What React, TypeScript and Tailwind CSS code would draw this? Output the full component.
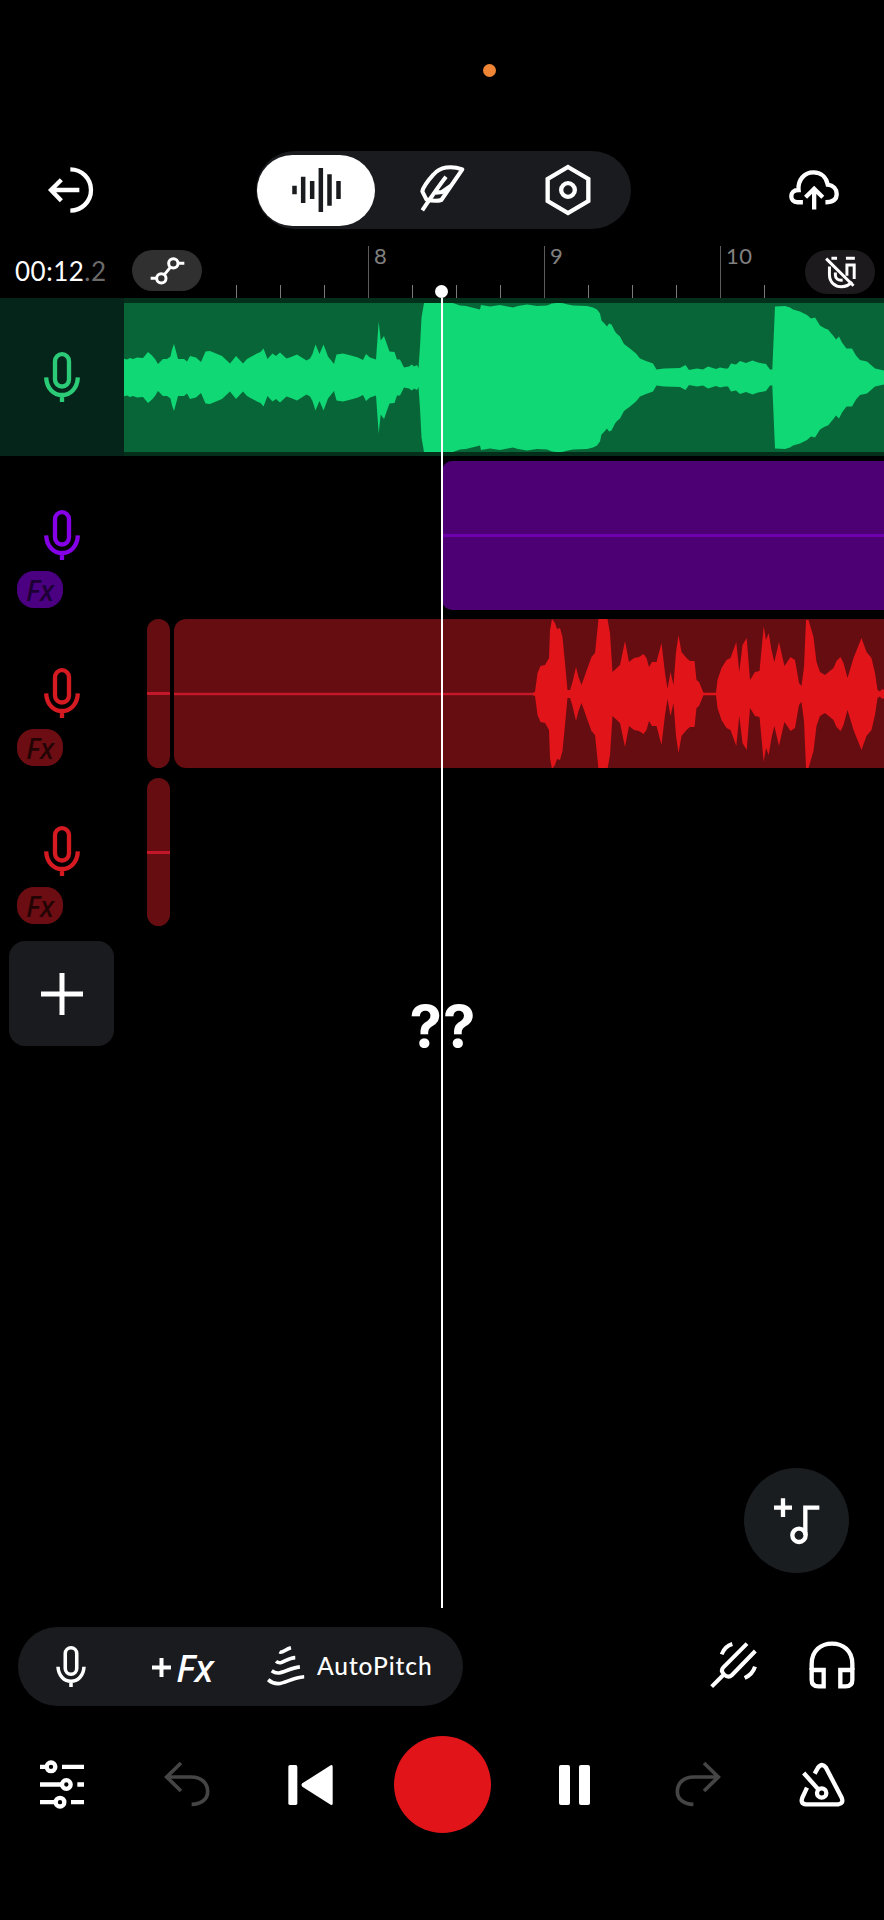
import type { ReactNode } from 'react';
import clsx from 'clsx';

type Point = [number, number];

// [x, amplitude] pairs, mirrored around the middle of the clip
const greenWave: Point[] = [
  [123.5, 19], [127, 18], [130, 19.5], [133, 18.5], [137, 20], [143, 19.5], [148, 25.5], [152, 22], [155, 18.5], [158, 13.5],
  [163, 18.5], [167, 18.5], [170.5, 21], [172, 28], [174, 33.5], [175.5, 28], [178, 18.5], [184, 18.5], [187, 16], [190, 21.5],
  [196, 20], [201, 15.5], [205.5, 26], [210, 26.5], [216, 24], [222, 21.5], [230, 14], [236, 21.5], [243, 14], [247, 18.5],
  [257, 24], [260.5, 25.5], [263.5, 29], [267.5, 18.5], [272.5, 24], [276, 21.5], [280, 25], [286.5, 19], [291, 20.5], [297, 23],
  [306.5, 17], [310, 19], [312.5, 23.5], [315.5, 33], [319.5, 23.5], [323.5, 33], [328, 21], [334, 13.5], [336.5, 23], [343, 24],
  [351, 22], [358, 20], [363, 17.5], [366, 23.5], [370, 20], [376, 18], [378.7, 56], [380.7, 37], [384, 41.5], [387, 33],
  [389.5, 26], [394.5, 25.5], [397, 18], [400, 18], [404, 10], [409, 11], [412, 13], [414, 11], [417, 12.5], [418.5, 9.5],
  [420, 31], [421.5, 60], [424, 74.5], [453, 74.5], [460, 72], [466, 71.5], [480, 68], [481, 72.5], [490, 71], [500, 72.5],
  [513, 70], [518, 71.5], [527, 73], [537, 71.5], [547, 72], [552, 74], [560, 75], [568, 73], [573, 72], [587, 71.5],
  [593, 70], [597, 68], [600, 64], [601.5, 57], [604, 54.5], [607, 51], [609, 54], [611.5, 53], [615, 46], [617, 43.5],
  [620, 41], [624, 33.5], [630, 29], [636, 24], [640, 19], [646, 16.5], [653, 14], [656.5, 8], [664, 9], [680, 9.5],
  [685.5, 12.5], [689, 7.5], [697, 9], [703, 8], [708, 11], [716, 8.5], [720, 10], [725, 9], [728, 9], [731, 14],
  [736, 13], [740, 16.5], [746, 14.5], [752.5, 17], [758, 15], [766, 13.5], [770, 8], [772.3, 8], [775, 71], [785, 71.5],
  [790, 70], [793, 68], [800, 66], [807, 62.5], [811, 59], [815, 60], [820, 52], [825, 49], [828, 48], [833, 42],
  [836, 38], [839, 41], [842, 35], [846.5, 29], [852, 29], [856, 22], [860, 17.5], [867, 16], [875, 9], [884, 7],
];

const redWave: Point[] = [
  [533, 1.3], [535, 2], [537.5, 21], [540.5, 28], [545, 29], [549, 36], [550, 64], [552, 75], [555, 71], [557, 65],
  [560, 66], [562.5, 57], [565, 31], [567.5, 4], [570, 4], [572.5, 12], [576, 27], [578.5, 17], [581.5, 9], [587.5, 26],
  [591.5, 37], [595, 41], [598.5, 75], [607.5, 75], [610, 61], [612.5, 22], [620, 29], [625, 53], [629, 32], [634, 36],
  [639, 37], [643.5, 40], [646.5, 36], [649, 27], [652, 32], [656.5, 32], [661.5, 51], [665, 21], [667.5, 5], [670.5, 22],
  [673.5, 9], [676, 42], [678.5, 59], [681.5, 42], [686.5, 36], [690, 33], [694.5, 33], [696.5, 14], [699, 12], [701.5, 6],
  [703.5, 1.3], [716, 1.3], [717.5, 14], [721.5, 26], [726.5, 34], [730.5, 36], [736.3, 52], [739.3, 22], [742.5, 49], [746.7, 56],
  [750, 14], [755, 22], [759.5, 23], [763.7, 68], [766, 54], [768.7, 61], [771.5, 44], [774.3, 32], [779, 52], [783.5, 32],
  [784.5, 28], [790.5, 37], [795, 34], [799, 11], [801.5, 8], [804, 27], [806, 74], [808.5, 74], [813.5, 57], [816.5, 32],
  [820, 22], [825, 19], [833.5, 26], [836.5, 33], [840.5, 37], [843.5, 31], [847.5, 16], [853.5, 36], [861.5, 56], [866.5, 42],
  [871.5, 36], [875, 21], [877.5, 4], [880, 2.5], [882, 5], [884, 4],
];

function wavePath(points: Point[], mid: number) {
  const top = points.map(([x, a]) => `${x} ${mid - a}`);
  const bottom = [...points].reverse().map(([x, a]) => `${x} ${mid + a}`);
  return `M${top.join('L')}L${bottom.join('L')}Z`;
}

interface IconProps {
  viewBox: string;
  className: string;
  strokeWidth?: number;
  children: ReactNode;
}

function Icon({ viewBox, className, strokeWidth = 13, children }: IconProps) {
  return (
    <svg viewBox={viewBox} className={clsx('block shrink-0', className)} fill="none" stroke="currentColor" strokeWidth={strokeWidth}>
      {children}
    </svg>
  );
}

function MicIcon({ className }: { className: string }) {
  return (
    <Icon viewBox="0 0 108 150" className={className}>
      <rect x="33" y="6.5" width="42" height="97" rx="21" />
      <path d="M6.5 76C8 110 30 129 54 129S100 110 101.500 76M54 130V150" />
    </Icon>
  );
}

function UndoIcon({ className }: { className?: string }) {
  return (
    <Icon viewBox="0 0 144 144" className={clsx('w-12 h-12 text-[#454545]', className)} strokeWidth={11}>
      <path d="M54 6L11 48L54 90M10 48H84C118 48 134 68 134 92C134 116 112 130 86 130" />
    </Icon>
  );
}

interface TrackHeaderProps {
  active?: boolean;
  micColor: string;
  badge?: string;
}

function TrackHeader({ active, micColor, badge }: TrackHeaderProps) {
  return (
    <div className={clsx('w-[124px] shrink-0 pt-[54px]', active && 'bg-[#06251a]')}>
      <MicIcon className={clsx('w-9 h-[50px] ml-11', micColor)} />
      {badge && (
        <div className={clsx("ml-[17px] mt-[11px] w-[46px] h-[37px] rounded-[17px] flex items-center justify-center text-[28px] leading-none italic font-medium font-['Noto_Sans']", badge)}>
          Fx
        </div>
      )}
    </div>
  );
}

// one cell per quarter beat
const ticks = ['', '', '', '8', '', '', '', '9', '', '', '', '10', ''];

function Ruler() {
  return (
    <div className="flex h-[52px] w-[569px]">
      {ticks.map((label, i) => (
        <div key={i} className={clsx('shrink-0 flex items-end', i === ticks.length - 1 ? 'w-10' : 'w-11')}>
          <div className={clsx('w-px shrink-0', label ? 'h-[52px] bg-[#5c5c5c]' : 'h-[13px] bg-[#7a7a7a]')} />
          {label && <span className="self-start -mt-1 pl-[5px] text-[22px] leading-[28px] tracking-[0.5px] text-[#808080]">{label}</span>}
        </div>
      ))}
    </div>
  );
}

function TopBar() {
  return (
    <div className="grid grid-cols-[256px_375px_1fr] items-center h-[78px]">
      <Icon viewBox="0 0 144 144" className="w-12 h-12 ml-[46px] text-white">
        <path d="M73 10A62 62 0 0 1 73 134M100 72H16M46 41L15 72L46 104" />
      </Icon>
      <div className="flex items-center h-[78px] rounded-full bg-[#1a1b1e] pl-px text-white">
        <div className="w-[118px] h-[71px] rounded-full bg-white flex items-center justify-center text-[#1a1b1e]">
          <Icon viewBox="0 0 146 132" className="w-[49px] h-11" strokeWidth={13.5}>
            <path d="M7 53V79M33 26V105M60 39V93M86 0V132M112 19V113M139 39V93" />
          </Icon>
        </div>
        <div className="w-[134px] flex justify-center">
          <Icon viewBox="0 0 144 144" className="w-12 h-12 -mt-1" strokeWidth={12}>
            <path d="M133 16C100 4 66 8 46 32C30 50 16 66 13 82L25 106C42 111 58 112 70 108L133 16Z" strokeLinejoin="round" />
            <path d="M13 139C34 108 56 74 84 38M46 87L72 84L98 66" />
          </Icon>
        </div>
        <div className="w-[118px] flex justify-center">
          <Icon viewBox="0 0 144 156" className="w-12 h-[52px]">
            <path d="M72 9L133 45V111L72 147L11 111V45Z" />
            <circle cx="72" cy="78" r="20.5" />
          </Icon>
        </div>
      </div>
      <Icon viewBox="0 0 160 144" className="w-[53px] h-12 ml-[156px] text-white">
        <path d="M48 109H32C18 109 13 100 13 91C13 80 20 72 35 72C32 42 52 19 80 19C103 19 119 34 123 56C140 58 150 69 150 84C150 100 138 109 116 109" />
        <path d="M82 131V70M56 94L82 68L108 94" />
      </Icon>
    </div>
  );
}

function TimeRow() {
  return (
    <div className="flex h-[52px] mt-[17px]">
      <div className="w-[132px] pl-[15px] pt-[11px] text-[26px] leading-[28px] tracking-[0.5px] text-white whitespace-nowrap">
        00:12<span className="text-[#6a6a6a]">.2</span>
      </div>
      <div className="mt-1 w-[70px] h-[41px] rounded-full bg-[#303030] flex items-center justify-center text-white">
        <Icon viewBox="0 0 105 90" className="w-[35px] h-[30px]" strokeWidth={9}>
          <circle cx="70" cy="22" r="14" />
          <circle cx="34" cy="67" r="14" />
          <path d="M84 22H103M2 67H20M61 34L43 56" />
        </Icon>
      </div>
      <div className="ml-[34px]">
        <Ruler />
      </div>
      <div className="mt-1 w-[70px] h-[44px] rounded-full bg-[#1c1a1c] flex items-center justify-center text-white">
        <Icon viewBox="0 0 96 100" className="w-8 h-[33px]" strokeWidth={9}>
          <path d="M16 32V56C16 80 33 93 52 93C66 93 77 87 84 78M91 70V27H69V60" />
          <path d="M34 50V58C34 68 42 75 56 73M22 7H39M66 7H93M6 8L89 90" />
        </Icon>
      </div>
    </div>
  );
}

function Tracks() {
  return (
    <div>
      <div className="flex h-[158px] bg-[#04301b]">
        <TrackHeader active micColor="text-[#2bcb78]" />
        <div className="mt-[5px] h-[149px] flex-1 bg-[#086538]">
          <svg viewBox="124 0 760 149" className="block w-[760px] h-[149px]">
            <path d={wavePath(greenWave, 74.5)} fill="#10d874" />
          </svg>
        </div>
      </div>

      <div className="flex h-[158px]">
        <TrackHeader micColor="text-[#8500e6]" badge="bg-[#4a0080] text-[#1c0033]" />
        <div className="mt-[5px] ml-[318px] h-[149px] flex-1 rounded-l-[10px] bg-[#4d0073] flex items-center">
          <div className="h-[3px] w-full bg-[#6f00ae]" />
        </div>
      </div>

      <div className="flex h-[158px]">
        <TrackHeader micColor="text-[#d61a22]" badge="bg-[#6b0d12] text-[#230405]" />
        <div className="mt-[5px] ml-[23px] h-[149px] w-[23px] rounded-full bg-[#650d11] flex items-center">
          <div className="h-[3px] w-full bg-[#c4182a]" />
        </div>
        <div className="mt-[5px] ml-1 h-[149px] flex-1 rounded-l-[12px] bg-[#650d11] overflow-hidden">
          <svg viewBox="174 0 710 149" className="block w-[710px] h-[149px]">
            <path d="M174 75H536" stroke="#c4182a" strokeWidth="2.6" />
            <path d={wavePath(redWave, 75)} fill="#e11419" />
          </svg>
        </div>
      </div>

      <div className="flex h-[158px]">
        <TrackHeader micColor="text-[#d61a22]" badge="bg-[#6b0d12] text-[#230405]" />
        <div className="mt-1.5 ml-[23px] h-[148px] w-[23px] rounded-full bg-[#650d11] flex items-center">
          <div className="h-[3px] w-full bg-[#c4182a]" />
        </div>
      </div>

      <button className="block mt-[11px] ml-[9px] w-[105px] h-[105px] rounded-2xl bg-[#1a1b1e] text-white">
        <Icon viewBox="0 0 42 42" className="w-[42px] h-[42px] mx-auto" strokeWidth={5}>
          <path d="M21 0V42M0 21H42" />
        </Icon>
      </button>
    </div>
  );
}

function EffectsBar() {
  return (
    <div className="flex items-center h-[79px] text-white">
      <div className="ml-[18px] w-[445px] h-[79px] rounded-full bg-[#1a1b1e] flex items-center">
        <MicIcon className="w-[30px] h-[41px] ml-[38px]" />
        <div className="ml-[66px] w-[63px] flex items-center whitespace-nowrap leading-none">
          <Icon viewBox="0 0 19 19" className="w-[19px] h-[19px] mt-0.5" strokeWidth={4}>
            <path d="M9.5 0V19M0 9.500H19" />
          </Icon>
          <span className="ml-[5px] text-[38px] italic font-medium font-['Noto_Sans']">Fx</span>
        </div>
        <Icon viewBox="0 0 120 130" className="w-10 h-[43px] ml-[51px]" strokeWidth={11}>
          <path d="M40 21C50 26 58 12 75 8M30 49C46 64 60 39 88 38M17 78C42 97 62 70 102 66M6 105C42 135 64 99 115 96" />
        </Icon>
        <span className="ml-[11px] text-[24.5px] font-medium leading-none tracking-[0.9px]">AutoPitch</span>
      </div>
      <Icon viewBox="0 0 144 144" className="w-12 h-12 ml-[247px] -mt-1" strokeWidth={12}>
        <path d="M5 137L43 99M111 8L40 79C33 86 35 93 42 100C50 108 59 109 66 102L136 30" />
        <path d="M67 9Q44 16 35 40M135 77Q128 100 104 111" />
      </Icon>
      <Icon viewBox="0 0 144 144" className="w-12 h-12 ml-[50px] -mt-1">
        <path d="M11 87V69C11 28 40 8 72 8S133 28 133 69V87" />
        <path d="M11 87H47V136H31C18 136 11 129 11 117ZM133 87H97V136H113C126 136 133 129 133 117Z" />
      </Icon>
    </div>
  );
}

function Transport() {
  return (
    <div className="flex items-center h-[97px] mt-[30px] text-white">
      <Icon viewBox="0 0 132 146" className="w-11 h-[49px] ml-10">
        <path d="M0 20H20M66 20H132M0 73H66M112 73H132M0 126H47M93 126H132" />
        <circle cx="33" cy="20" r="13" />
        <circle cx="79" cy="73" r="13" />
        <circle cx="60" cy="126" r="13" />
      </Icon>
      <UndoIcon className="ml-[79px]" />
      <svg viewBox="0 0 133 120" className="block w-[45px] h-10 ml-[77px]" fill="currentColor">
        <rect width="27" height="120" rx="5" />
        <path d="M42 55L127 1Q133 -2 133 5V115Q133 122 127 119L42 65Q37 60 42 55Z" />
      </svg>
      <div className="ml-[61px] size-[97px] rounded-full bg-[#e11419]" />
      <div className="ml-[68px] flex gap-[9px]">
        <div className="w-[11px] h-10 rounded-[2px] bg-white" />
        <div className="w-[11px] h-10 rounded-[2px] bg-white" />
      </div>
      <UndoIcon className="ml-[84px] -scale-x-100" />
      <Icon viewBox="0 0 144 144" className="w-12 h-12 ml-[76px]">
        <path d="M50 38L60 20Q72 4 84 20L131 110Q138 128 121 130H24Q6 128 13 110L27 80M17 36L61 85" />
        <circle cx="71" cy="96" r="14" />
      </Icon>
    </div>
  );
}

export default function App() {
  return (
    <div className="relative w-[884px] h-[1920px] bg-black overflow-hidden flex flex-col font-[Lato,sans-serif]">
      <div className="h-[151px] flex justify-center pt-16">
        <div className="size-[13px] rounded-full bg-[#f08535] ml-[95px]" />
      </div>

      <TopBar />
      <TimeRow />
      <Tracks />

      <div className="mt-auto mb-[87px]">
        <EffectsBar />
        <Transport />
      </div>

      {/* Playhead */}
      <div className="absolute left-[435px] top-[285px] h-[1323px] w-[13px] flex flex-col items-center">
        <div className="size-[13px] shrink-0 rounded-full bg-white" />
        <div className="w-[2px] flex-1 bg-white" />
      </div>

      <div className="absolute left-[343px] w-[200px] top-[990px] text-center text-[58px] leading-[72px] tracking-[1px] font-bold text-white font-['Inter']">
        ??
      </div>

      <button className="absolute left-[744px] top-[1468px] size-[105px] rounded-full bg-[#1a1d20] text-white flex items-center justify-center">
        <Icon viewBox="0 0 144 144" className="w-12 h-12" strokeWidth={13}>
          <path d="M30 4V60M3 32H57M139 32H97V114" />
          <circle cx="78" cy="115" r="20" />
        </Icon>
      </button>
    </div>
  );
}
